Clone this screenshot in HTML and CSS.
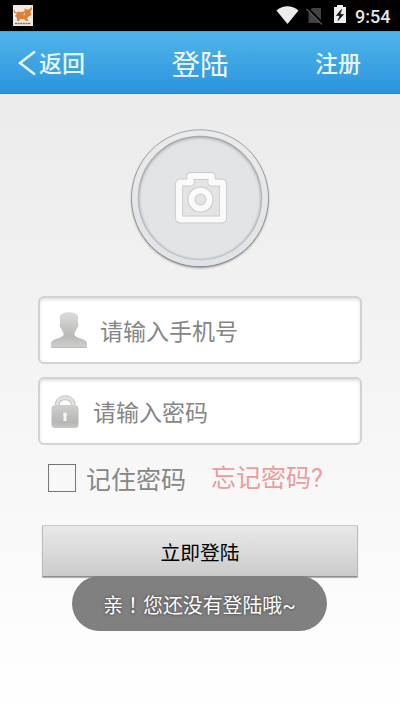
FILE: index.html
```html
<!DOCTYPE html>
<html lang="zh-CN">
<head>
<meta charset="utf-8">
<title>登陆</title>
<link rel="stylesheet" href="styles.css">
</head>
<body>
<div class="status">
  <svg class="app-icon" width="20" height="21" viewBox="0 0 20 21">
    <rect width="20" height="21" fill="#f3e9e2"/>
    <path d="M1.500 4Q1 7 4 7.500L6 6.500Q9 8 12 5.500L11 3.500L14 4.500Q18 5 18 1.500Q20.500 4 17.500 6.500L18.500 10L15 12L14 14L16 16H13L11 14H7L6 16H4L4 13L2 11L4 8.500Q-.5 8 1.500 4Z" fill="#db8138"/>
    <path d="M11 7.500L12.500 9.500L10.500 10.500Z" fill="#f8d8a8"/>
    <path d="M2 18.500H18" stroke="#8b6b60" stroke-width="1.500" stroke-dasharray="2 .6"/>
  </svg>
  <svg class="status-icons" width="72" height="24" viewBox="0 0 72 24">
    <path d="M.4 6.500Q11.500-1.800 22.500 6.500L11.500 20Z" fill="#ececec"/>
    <path d="M32.500 8L36 4H45V19H32.500Z" fill="#424242"/>
    <path d="M31 3.500L47 19.500" stroke="#000" stroke-width="2"/>
    <path d="M30.500 5L46 20.500" stroke="#555" stroke-width="1.200"/>
    <path d="M58 3H61V1H67V3H70V19H58Z" fill="#efefef"/>
    <path d="M65.500 5.500L60.500 11.500H64L62 16.500L67.500 10.500H64Z" fill="#111" stroke="#111" stroke-width=".7"/>
  </svg>
  <span class="clock">9:54</span>
</div>
<header class="nav">
  <div class="back">
    <svg width="19" height="28" viewBox="0 0 19 28"><path d="M17 2.500L2 14L17 25.500" fill="none" stroke="#e8f6fe" stroke-width="2.500"/></svg>
    <span>返回</span>
  </div>
  <h1 class="title">登陆</h1>
  <span class="register">注册</span>
</header>
<main class="page">
  <svg class="avatar" width="144" height="146" viewBox="0 0 144 146">
    <defs>
      <linearGradient id="ring" x1="0" y1="0" x2="0" y2="1"><stop offset="0" stop-color="#eaebec"/><stop offset="1" stop-color="#dfe2e7"/></linearGradient>
      <linearGradient id="edge" x1="0" y1="0" x2="0" y2="1"><stop offset="0" stop-color="#a6a6a6"/><stop offset="1" stop-color="#858585"/></linearGradient>
      <linearGradient id="inner" x1="0" y1="0" x2="0" y2="1"><stop offset="0" stop-color="#a9abad"/><stop offset="1" stop-color="#b9bbbe"/></linearGradient>
      <filter id="soft" x="-10%" y="-10%" width="120%" height="120%"><feGaussianBlur stdDeviation="1"/></filter>
    </defs>
    <circle cx="72" cy="72.500" r="68.500" fill="#999" filter="url(#soft)"/>
    <circle cx="72" cy="71.300" r="68.500" fill="url(#ring)" stroke="url(#edge)"/>
    <circle cx="72" cy="71" r="61.300" fill="#c4c6c8" stroke="url(#inner)" stroke-width="1.800"/>
    <circle cx="72" cy="71.900" r="60" fill="#e2e4e6" filter="url(#soft)"/>
    <g fill="none" stroke-linejoin="round">
      <path d="M53 55.500H62.500V49H83.500V55.500H93Q95 55.500 95 57.500V90.500Q95 92.500 93 92.500H53Q51 92.500 51 90.500V57.500Q51 55.500 53 55.500Z" stroke="#c9cbcd" stroke-width="8"/>
      <path d="M53 55.500H62.500V49H83.500V55.500H93Q95 55.500 95 57.500V90.500Q95 92.500 93 92.500H53Q51 92.500 51 90.500V57.500Q51 55.500 53 55.500Z" stroke="#fafafa" stroke-width="6.200"/>
      <circle cx="72.500" cy="72.500" r="9" stroke="#c9cbcd" stroke-width="8"/>
      <circle cx="72.500" cy="72.500" r="9" stroke="#fafafa" stroke-width="6"/>
    </g>
  </svg>
  <div class="field phone">
    <svg width="38" height="38" viewBox="0 0 38 38">
      <defs><linearGradient id="gray" x1="0" y1="0" x2="0" y2="1"><stop offset="0" stop-color="#dcdcdb"/><stop offset=".65" stop-color="#b9b9b7"/><stop offset="1" stop-color="#cfcfcd"/></linearGradient></defs>
      <path d="M10 5Q11 2 16 1.500Q19 .5 22 1.500Q27 2 28 5V12Q29.500 15 27 17Q26 20 24.500 22V24Q26 26 29 27Q36 28.500 37 32V37H1V32Q2 28.500 9 27Q12 26 13.500 24V22Q12 20 11 17Q8.500 15 10 12Z" fill="url(#gray)"/>
      <path d="M1.500 36.500H36.500" stroke="#b9b9b7"/>
    </svg>
    <span>请输入手机号</span>
  </div>
  <div class="field password">
    <svg width="28" height="36" viewBox="0 0 28 36">
      <defs><linearGradient id="lock" x1="0" y1="0" x2="0" y2="1"><stop offset="0" stop-color="#d0d0cf"/><stop offset=".75" stop-color="#b6b6b4"/><stop offset="1" stop-color="#c8c8c6"/></linearGradient></defs>
      <path d="M6.500 13V10A8 7 0 0 1 22 10V13" fill="none" stroke="#c4c4c3" stroke-width="5"/>
      <path d="M6.500 13V10A8 7 0 0 1 22 10V13" fill="none" stroke="#e0e0df" stroke-width="3"/>
      <rect x=".5" y="12" width="27" height="23" rx="3.500" fill="url(#lock)"/>
      <path d="M14 19.500A2 2 0 0 1 15.300 23L15.600 28H12.400L12.700 23A2 2 0 0 1 14 19.500Z" fill="#f5f5f5"/>
    </svg>
    <span>请输入密码</span>
  </div>
  <div class="options">
    <span class="checkbox"></span>
    <span class="remember">记住密码</span>
    <span class="forgot">忘记密码<span class="latin">?</span></span>
  </div>
  <div class="submit">立即登陆</div>
</main>
<div class="toast">亲<span class="mark" lang="zh-TW">！</span>您还没有登陆哦<span class="latin">~</span></div>
</body>
</html>
```
FILE: styles.css
```css
* { box-sizing: border-box; }
body {
  margin: 0;
  width: 400px;
  height: 711px;
  position: relative;
  overflow: hidden;
  display: flex;
  flex-direction: column;
  font-family: "Noto Sans CJK SC", sans-serif;
  white-space: nowrap;
}
.status {
  height: 31px;
  background: #000;
  display: flex;
  align-items: center;
  padding: 0 9px 0 13px;
}
.app-icon { margin-top: -1px; }
.status-icons { margin-left: 243px; }
.clock {
  margin-left: 7px;
  font: 500 18px/31px Roboto, sans-serif;
  color: #e6e6e6;
  padding-top: 1px;
}
.nav {
  height: 63px;
  display: grid;
  grid-template-columns: 1fr auto 1fr;
  align-items: center;
  padding: 0 18px;
  background: linear-gradient(#50b5e9, #2b94de);
  border-top: 1px solid #4aa4d2;
  border-bottom: 1px solid #2585ce;
  color: #e8f6fe;
}
.back { display: flex; align-items: center; gap: 2px; }
.back span, .register { font-size: 23px; font-weight: 500; line-height: 28px; padding-bottom: 2px; }
.title { margin: 0; font-size: 28.5px; font-weight: 400; line-height: 34px; color: #f4fbff; }
.register { justify-self: end; margin-right: 21px; }
.page {
  flex: 1;
  display: flex;
  flex-direction: column;
  background: linear-gradient(#ebebeb, #fff);
  padding: 33px 38px 0;
}
.avatar { align-self: center; }
.field {
  height: 68px;
  display: flex;
  align-items: center;
  border: 2px solid #d2d2d2;
  border-radius: 6px;
  background: #fff;
  box-shadow: inset 0 2px 3px #e2e2e2;
  color: #858585;
  font-size: 23px;
  line-height: 30px;
}
.phone { margin-top: 23px; padding-left: 10px; gap: 12px; }
.password { margin-top: 13px; padding-left: 11px; gap: 14px; }
.options {
  display: flex;
  align-items: center;
  height: 30px;
  margin-top: 18px;
  padding-left: 10px;
}
.checkbox { width: 28px; height: 28px; border: 1px solid #757575; }
.remember { margin-left: 10px; font-size: 25px; line-height: 30px; color: #868686; padding-bottom: 1px; }
.forgot { margin-left: 25px; font-size: 25px; line-height: 30px; color: #eb9c9c; padding-bottom: 2px; }
.latin { font-family: Roboto, sans-serif; }
.submit {
  height: 52px;
  margin: 32px 4px 0;
  border: 1px solid #bcbcbc;
  border-top-color: #c8c8c8;
  border-bottom-color: #8d8d8d;
  border-radius: 1px;
  background: linear-gradient(#e9e9e9, #cbcbcb);
  box-shadow: 0 1px 1px #aaa;
  text-align: center;
  font-size: 19.800px;
  line-height: 51px;
  color: #000;
}
.toast {
  position: absolute;
  left: 72px;
  top: 576px;
  width: 255px;
  height: 55px;
  border-radius: 28px;
  background: #808080;
  color: #fff;
  font-size: 19.900px;
  line-height: 57px;
  text-align: center;
  text-shadow: 0 0 3px #333;
}
.mark { font-family: "Noto Sans CJK TC", sans-serif; }
```
